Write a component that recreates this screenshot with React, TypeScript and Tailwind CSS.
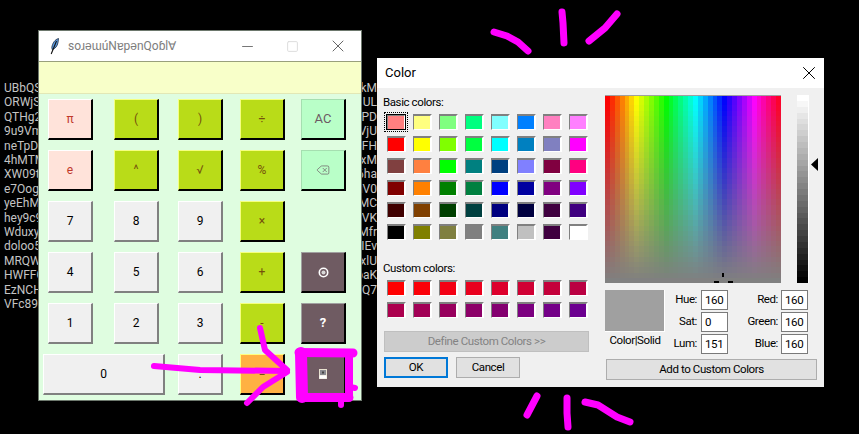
import type { JSX, ReactNode } from 'react';
import { Delete, Minus, Square, X } from 'lucide-react';

type Tone = 'pink' | 'lime' | 'mint' | 'gray' | 'dark' | 'orange';

const TONES: Record<Tone, string> = {
  pink: 'bg-[#ffe3da] text-[#c0392b] border-t-white border-l-white border-r-black border-b-black',
  lime: 'bg-[#b9dc18] text-[#75510c] border-t-[#f5ff80] border-l-[#f5ff80] border-r-black border-b-black',
  mint: 'bg-[#b9ffc8] text-[#6c5a64] border-t-[#a5dfb0] border-l-[#a5dfb0] border-r-black border-b-black',
  gray: 'bg-[#f0f0f0] text-black border-t-white border-l-white border-r-[#808080] border-b-[#808080]',
  dark: 'bg-[#6f5b62] text-white border-t-[#a0a0a0] border-l-[#a0a0a0] border-r-black border-b-black',
  orange: 'bg-[#ffb142] text-[#75510c] border-t-[#ffff80] border-l-[#ffff80] border-r-black border-b-black',
};

const BASIC_COLORS = [
  '#ff8080', '#ffff80', '#80ff80', '#00ff80', '#80ffff', '#0080ff', '#ff80c0', '#ff80ff',
  '#ff0000', '#ffff00', '#80ff00', '#00ff40', '#00ffff', '#0080c0', '#8080c0', '#ff00ff',
  '#804040', '#ff8040', '#00ff00', '#008080', '#004080', '#8080ff', '#800040', '#ff0080',
  '#800000', '#ff8000', '#008000', '#008040', '#0000ff', '#0000a0', '#800080', '#8000ff',
  '#400000', '#804000', '#004000', '#004040', '#000080', '#000040', '#400040', '#400080',
  '#000000', '#808000', '#808040', '#808080', '#408080', '#c0c0c0', '#400040', '#ffffff',
];

const CUSTOM_COLORS = [
  '#ff0000', '#fb0008', '#f30014', '#e9001e', '#dd002c', '#d00034', '#c4003a', '#ba0042',
  '#ac004e', '#a20056', '#98005e', '#8c0068', '#840070', '#7c0080', '#740088', '#6c0090',
];

const LEFT_LINES = ['UBbQS', 'ORWjS', 'QTHg2', '9u9Vm', 'neTpD', '4hMTM', 'XW09t', 'e7Oog', 'yeEhM', 'hey9c9', 'Wduxy', 'doloo5', 'MRQW', 'HWFFC', 'EzNCH', 'VFc895'];
const RIGHT_LINES = ['kM', 'UL', 'aPD', 'VjU', 'FH', 'xM', '6ha', 'uV0', 'MC', 'lVK', 'Mfr', 'IEv', 'xlU', 'paK', 'YQ7'];

function CalcButton({ tone, children, wide = false }: { readonly tone: Tone; readonly children?: ReactNode; readonly wide?: boolean }): JSX.Element {
  return (
    <button
      type="button"
      className={`flex h-[41px] items-center justify-center border-t border-l border-r-2 border-b-2 text-[12px] ${wide ? 'col-span-2 -ml-[5px] w-[122px]' : 'w-[45px]'} ${TONES[tone]}`}
    >
      {children}
    </button>
  );
}

function Swatch({ color, selected = false }: { readonly color: string; readonly selected?: boolean }): JSX.Element {
  return (
    <div
      className="relative h-[16px] w-[19px] border-t-2 border-l border-r-2 border-b border-t-[#808080] border-l-[#808080] border-r-white border-b-white"
      style={{ backgroundColor: color }}
    >
      {selected && (
        <div className="absolute -top-[4px] -right-[4px] -bottom-[3px] -left-[4px] border border-dotted border-black p-px">
          <div className="h-full w-full border border-black" />
        </div>
      )}
    </div>
  );
}

function Spectrum(): JSX.Element {
  const cols = Array.from({ length: 36 }, (_, i) => i);
  const rows = Array.from({ length: 36 }, (_, i) => i);
  return (
    <svg width="176" height="188" viewBox="0 0 176 188" className="block" shapeRendering="crispEdges">
      {cols.map((c) => rows.map((r) => (
        <rect
          key={`${c}-${r}`}
          x={(c * 176) / 36}
          y={(r * 188) / 36}
          width={176 / 36 + 0.5}
          height={188 / 36 + 0.5}
          fill={`hsl(${c * 10} ${100 - (r * 100) / 35}% 50%)`}
        />
      )))}
      <rect x="0" y="0" width="176" height="1" fill="#a0a0a0" />
      <rect x="117" y="178" width="2" height="4" fill="#000" />
      <rect x="109" y="186" width="5" height="2" fill="#000" />
      <rect x="123" y="186" width="5" height="2" fill="#000" />
    </svg>
  );
}

function LumBar(): JSX.Element {
  const steps = Array.from({ length: 32 }, (_, i) => i);
  return (
    <div className="flex h-[188px] w-[11px] flex-col">
      {steps.map((s) => {
        const v = Math.round(255 - (s * 255) / 31);
        return <div key={s} className="flex-1" style={{ backgroundColor: `rgb(${v} ${v} ${v})` }} />;
      })}
    </div>
  );
}

function Field({ label, value, labelWidth }: { readonly label: string; readonly value: string; readonly labelWidth: string }): JSX.Element {
  return (
    <div className="flex h-[20px] items-center">
      <span className={`${labelWidth} text-right text-black`}>{label}</span>
      <input
        readOnly
        aria-label={label}
        defaultValue={value}
        className="h-[20px] w-[27px] border border-[#7a7a7a] bg-white pl-[3px] text-black outline-none"
      />
    </div>
  );
}

function Calculator(): JSX.Element {
  return (
    <div className="absolute top-[30px] left-[38px] flex h-[371px] w-[324px] flex-col border border-[#6d786d] bg-[#dffde0]">
      <div className="flex h-[30px] shrink-0 items-center bg-white pl-[11px]">
        <svg width="10" height="17" viewBox="0 0 10 17" className="shrink-0">
          <path d="M8.5 0.5C5 1.5 2.5 5 1.8 9.5L2.2 11.5C5 11 7.5 8 8 4.5Z" fill="#5b9ae0" stroke="#1c2b40" strokeWidth="0.8" />
          <path d="M6.5 3L1.2 16" stroke="#111" strokeWidth="1.1" fill="none" />
        </svg>
        <span className="ml-[8px] w-[171px] text-[12px] leading-none whitespace-nowrap text-[#7d7d7d]">soɹǝɯúNɐpǝnQoɓl∀</span>
        <Minus size={17} strokeWidth={1} absoluteStrokeWidth className="shrink-0 text-[#777]" />
        <Square size={13} strokeWidth={1} absoluteStrokeWidth className="ml-[30px] shrink-0 text-[#ddd]" />
        <X size={20} strokeWidth={1} absoluteStrokeWidth className="ml-[29px] shrink-0 text-[#666]" />
      </div>
      <div className="h-[33px] shrink-0 border-t border-b border-t-[#99a07c] border-b-[#e2e8b6] bg-[#f8ffc9]" />
      <div className="grid grid-cols-[66px_64px_62px_61px_45px] gap-y-[10px] pt-[5px] pl-[9px]">
        <CalcButton tone="pink">π</CalcButton>
        <CalcButton tone="lime">(</CalcButton>
        <CalcButton tone="lime">)</CalcButton>
        <CalcButton tone="lime">÷</CalcButton>
        <CalcButton tone="mint"><span className="text-[13px]">AC</span></CalcButton>

        <CalcButton tone="pink">e</CalcButton>
        <CalcButton tone="lime">^</CalcButton>
        <CalcButton tone="lime">√</CalcButton>
        <CalcButton tone="lime">%</CalcButton>
        <CalcButton tone="mint"><Delete size={14} strokeWidth={1.2} /></CalcButton>

        <CalcButton tone="gray">7</CalcButton>
        <CalcButton tone="gray">8</CalcButton>
        <CalcButton tone="gray">9</CalcButton>
        <CalcButton tone="lime">×</CalcButton>
        <div />

        <CalcButton tone="gray">4</CalcButton>
        <CalcButton tone="gray">5</CalcButton>
        <CalcButton tone="gray">6</CalcButton>
        <CalcButton tone="lime">+</CalcButton>
        <CalcButton tone="dark">
          <svg width="11" height="11" viewBox="0 0 11 11">
            <circle cx="5.5" cy="5.5" r="4.2" fill="none" stroke="#fff" strokeWidth="1.6" />
            <circle cx="5.5" cy="5.5" r="2" fill="#d8d8d8" />
          </svg>
        </CalcButton>

        <CalcButton tone="gray">1</CalcButton>
        <CalcButton tone="gray">2</CalcButton>
        <CalcButton tone="gray">3</CalcButton>
        <CalcButton tone="lime">-</CalcButton>
        <CalcButton tone="dark"><span className="text-[13px] font-bold">?</span></CalcButton>

        <CalcButton tone="gray" wide>0</CalcButton>
        <CalcButton tone="gray">.</CalcButton>
        <CalcButton tone="orange">=</CalcButton>
        <CalcButton tone="dark">
          <svg width="8" height="10" viewBox="0 0 8 10">
            <rect width="8" height="10" fill="#e8e2d0" />
            <rect x="1" y="1" width="6" height="5" fill="#8a8a90" />
            <rect x="3" y="2.5" width="2" height="2" fill="#444" />
            <rect x="0.5" y="6.5" width="7" height="3" fill="#fff" />
          </svg>
        </CalcButton>
      </div>
    </div>
  );
}

function ColorDialog(): JSX.Element {
  return (
    <div className="absolute top-[58px] left-[377px] flex h-[329px] w-[447px] flex-col bg-[#f0f0f0]">
      <div className="flex h-[30px] shrink-0 items-center justify-between bg-white pr-[8px] pl-[8px]">
        <span className="text-[13px] text-black">Color</span>
        <X size={22} strokeWidth={1} absoluteStrokeWidth className="-mr-[4px] text-black" />
      </div>
      <div className="flex pl-[6px] text-[11.5px] tracking-[-0.4px]">
        <div className="flex w-[206px] flex-col">
          <div className="h-[14px] pt-[7px] leading-[14px] text-black">Basic colors:</div>
          <div className="mt-[12px] ml-[4px] grid grid-cols-[repeat(8,19px)] gap-x-[7px] gap-y-[6px]">
            {BASIC_COLORS.map((color, i) => (
              <Swatch key={`${color}-${i}`} color={color} selected={i === 0} />
            ))}
          </div>
          <div className="mt-[21px] h-[14px] leading-[14px] text-black">Custom colors:</div>
          <div className="mt-[5px] ml-[4px] grid grid-cols-[repeat(8,19px)] gap-x-[7px] gap-y-[6px]">
            {CUSTOM_COLORS.map((color) => (
              <Swatch key={color} color={color} />
            ))}
          </div>
          <button
            type="button"
            disabled
            className="mt-[13px] ml-px h-[21px] w-[205px] border border-[#bfbfbf] bg-[#cccccc] tracking-[-0.4px] text-[#838383]"
          >
            Define Custom Colors &gt;&gt;
          </button>
          <div className="mt-[5px] ml-px flex gap-[8px]">
            <button type="button" className="h-[21px] w-[64px] border-2 border-[#0078d7] bg-[#e1e1e1] text-black">OK</button>
            <button type="button" className="h-[21px] w-[64px] border border-[#adadad] bg-[#e1e1e1] text-black">Cancel</button>
          </div>
        </div>
        <div className="ml-[16px] flex w-[213px] flex-col pt-[7px]">
          <div className="flex">
            <Spectrum />
            <div className="ml-[16px] border-r border-r-white"><LumBar /></div>
            <svg width="7" height="13" viewBox="0 0 7 13" className="mt-[63px] ml-[2px]">
              <path d="M7 0V13L0 6.5Z" fill="#000" />
            </svg>
          </div>
          <div className="mt-[7px] flex">
            <div className="flex w-[60px] flex-col">
              <div className="h-[42px] border-r border-b border-r-white border-b-white bg-[#a0a0a0]" />
              <div className="mt-[1px] text-center leading-[15px] whitespace-nowrap text-black">Color|Solid</div>
            </div>
            <div className="flex h-[64px] flex-col justify-between">
              <Field label="Hue:" value="160" labelWidth="w-[36px] pr-[4px]" />
              <Field label="Sat:" value="0" labelWidth="w-[36px] pr-[4px]" />
              <Field label="Lum:" value="151" labelWidth="w-[36px] pr-[4px]" />
            </div>
            <div className="flex h-[64px] flex-col justify-between">
              <Field label="Red:" value="160" labelWidth="w-[53px] pr-[3px]" />
              <Field label="Green:" value="160" labelWidth="w-[53px] pr-[3px]" />
              <Field label="Blue:" value="160" labelWidth="w-[53px] pr-[3px]" />
            </div>
          </div>
          <button type="button" className="mt-[5px] ml-px h-[21px] w-[211px] border border-[#adadad] bg-[#e1e1e1] text-black">
            Add to Custom Colors
          </button>
        </div>
      </div>
    </div>
  );
}

function Scribbles(): JSX.Element {
  return (
    <svg width="859" height="434" viewBox="0 0 859 434" className="absolute inset-0" fill="none" stroke="#ff00ff" strokeLinecap="round" strokeLinejoin="round">
      <g strokeWidth="7">
        <path d="M494 32L507 36L518 42L528 51" />
        <path d="M562 12L563 23L564 43" />
        <path d="M617 14L605 28L589 41" />
        <path d="M537 396L527 415" />
        <path d="M567 398L567 413L568 427" />
        <path d="M585 402L598 405L617 417L630 422" />
      </g>
      <g strokeWidth="6">
        <path d="M154 366L200 370L287 371" />
        <path d="M260 328L265 350L287 370" />
        <path d="M287 372L263 387L247 403" />
        <path d="M341 400L341 405" />
        <path d="M350 387L355 388" />
      </g>
      <path d="M299 352.5L353 353" strokeWidth="9" />
      <path d="M301 353L302 397" strokeWidth="12" />
      <path d="M301 397.5L349 397.5" strokeWidth="9" />
      <path d="M349 355L349 397" strokeWidth="8" />
    </svg>
  );
}

export default function App(): JSX.Element {
  return (
    <div className="relative h-[434px] w-[859px] overflow-hidden bg-black font-['Roboto',sans-serif]">
      <div className="flex pt-[81px] text-[12px] leading-[14.4px] text-[#c4c4c4]">
        <div className="w-[38px] overflow-hidden pl-[4px] whitespace-nowrap">
          {LEFT_LINES.map((line) => <div key={line}>{line}</div>)}
        </div>
        <div className="ml-[324px] flex w-[15px] flex-col items-end overflow-hidden whitespace-nowrap">
          {RIGHT_LINES.map((line) => <div key={line}>{line}</div>)}
        </div>
      </div>
      <Calculator />
      <ColorDialog />
      <Scribbles />
    </div>
  );
}
